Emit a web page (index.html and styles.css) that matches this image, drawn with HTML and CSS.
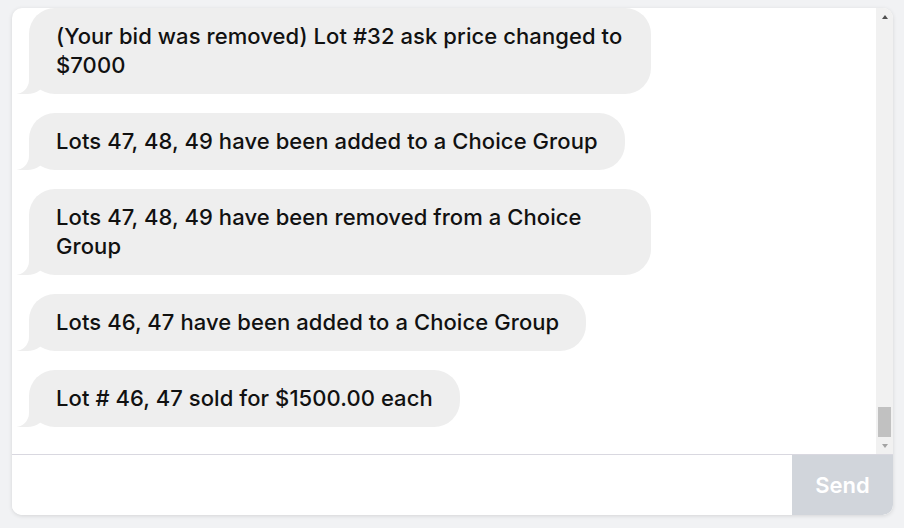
FILE: index.html
```html
<!DOCTYPE html>
<html lang="en">
<head>
<meta charset="utf-8">
<title>Lot chat</title>
<link rel="stylesheet" href="styles.css">
</head>
<body>
  <div class="chat">
    <div class="chat-body">
      <div class="messages">
        <div class="bubble">(Your bid was removed) Lot #32 ask price changed to $7000</div>
        <div class="bubble">Lots 47, 48, 49 have been added to a Choice Group</div>
        <div class="bubble">Lots 47, 48, 49 have been removed from a Choice Group</div>
        <div class="bubble">Lots 46, 47 have been added to a Choice Group</div>
        <div class="bubble">Lot # 46, 47 sold for $1500.00 each</div>
      </div>
      <div class="scrollbar" aria-hidden="true">
        <div class="sb-button"><span class="sb-arrow sb-up"></span></div>
        <div class="sb-track"><div class="sb-thumb"></div></div>
        <div class="sb-button"><span class="sb-arrow sb-down"></span></div>
      </div>
    </div>
    <form class="composer">
      <input class="composer-input" type="text" aria-label="Message">
      <button class="send" type="button">Send</button>
    </form>
  </div>
</body>
</html>
```

FILE: styles.css
```css
html, body {
  margin: 0;
  height: 100%;
}

body {
  background: #f1f2f4;
  padding: 8px 11px 13px 12px;
  box-sizing: border-box;
  font-family: Inter, "Noto Sans", sans-serif;
}

.chat {
  height: 507px;
  display: flex;
  flex-direction: column;
  background: #ffffff;
  border-radius: 10px;
  box-shadow: 0 1px 4px rgba(0, 0, 0, 0.12);
  overflow: hidden;
}

.chat-body {
  flex: 1;
  min-height: 0;
  display: flex;
}

.messages {
  flex: 1;
  min-width: 0;
  overflow: hidden;
  display: flex;
  flex-direction: column;
  justify-content: flex-end;
  align-items: flex-start;
  gap: 19px;
  padding: 0 17px 27px;
}

.bubble {
  position: relative;
  flex-shrink: 0;
  max-width: 622px;
  box-sizing: border-box;
  padding: 14px 27px;
  background: #eeeeee;
  border-radius: 26px;
  font-size: 22px;
  font-weight: 500;
  line-height: 29px;
  letter-spacing: 0.08px;
  color: #111111;
}

.bubble::before {
  content: "";
  position: absolute;
  bottom: 0;
  left: -12px;
  width: 28px;
  height: 26px;
  background: #eeeeee;
  border-bottom-right-radius: 18px 14px;
}

.bubble::after {
  content: "";
  position: absolute;
  bottom: 0;
  left: -30px;
  width: 30px;
  height: 26px;
  background: #ffffff;
  border-bottom-right-radius: 14px;
}

.scrollbar {
  width: 17px;
  flex-shrink: 0;
  display: flex;
  flex-direction: column;
  background: #f1f1f1;
}

.sb-button {
  height: 17px;
  display: flex;
  align-items: center;
  justify-content: center;
}

.sb-arrow {
  width: 0;
  height: 0;
  border-left: 3.5px solid transparent;
  border-right: 3.5px solid transparent;
}

.sb-up {
  border-bottom: 4px solid #505050;
}

.sb-down {
  border-top: 4px solid #a3a3a3;
}

.sb-track {
  flex: 1;
  display: flex;
  flex-direction: column;
  justify-content: flex-end;
}

.sb-thumb {
  height: 30px;
  margin: 0 2px;
  background: #c1c1c1;
}

.composer {
  display: flex;
  height: 61px;
  margin: 0;
  border-top: 1px solid #d9d8e0;
  box-sizing: border-box;
}

.composer-input {
  flex: 1;
  min-width: 0;
  border: 0;
  outline: none;
  padding: 0 16px;
  font: inherit;
  font-size: 20px;
  background: #ffffff;
}

.send {
  width: 101px;
  border: 0;
  background: #d1d5db;
  color: #ffffff;
  font-family: inherit;
  font-size: 22px;
  font-weight: 600;
  border-bottom-right-radius: 10px;
}
```
